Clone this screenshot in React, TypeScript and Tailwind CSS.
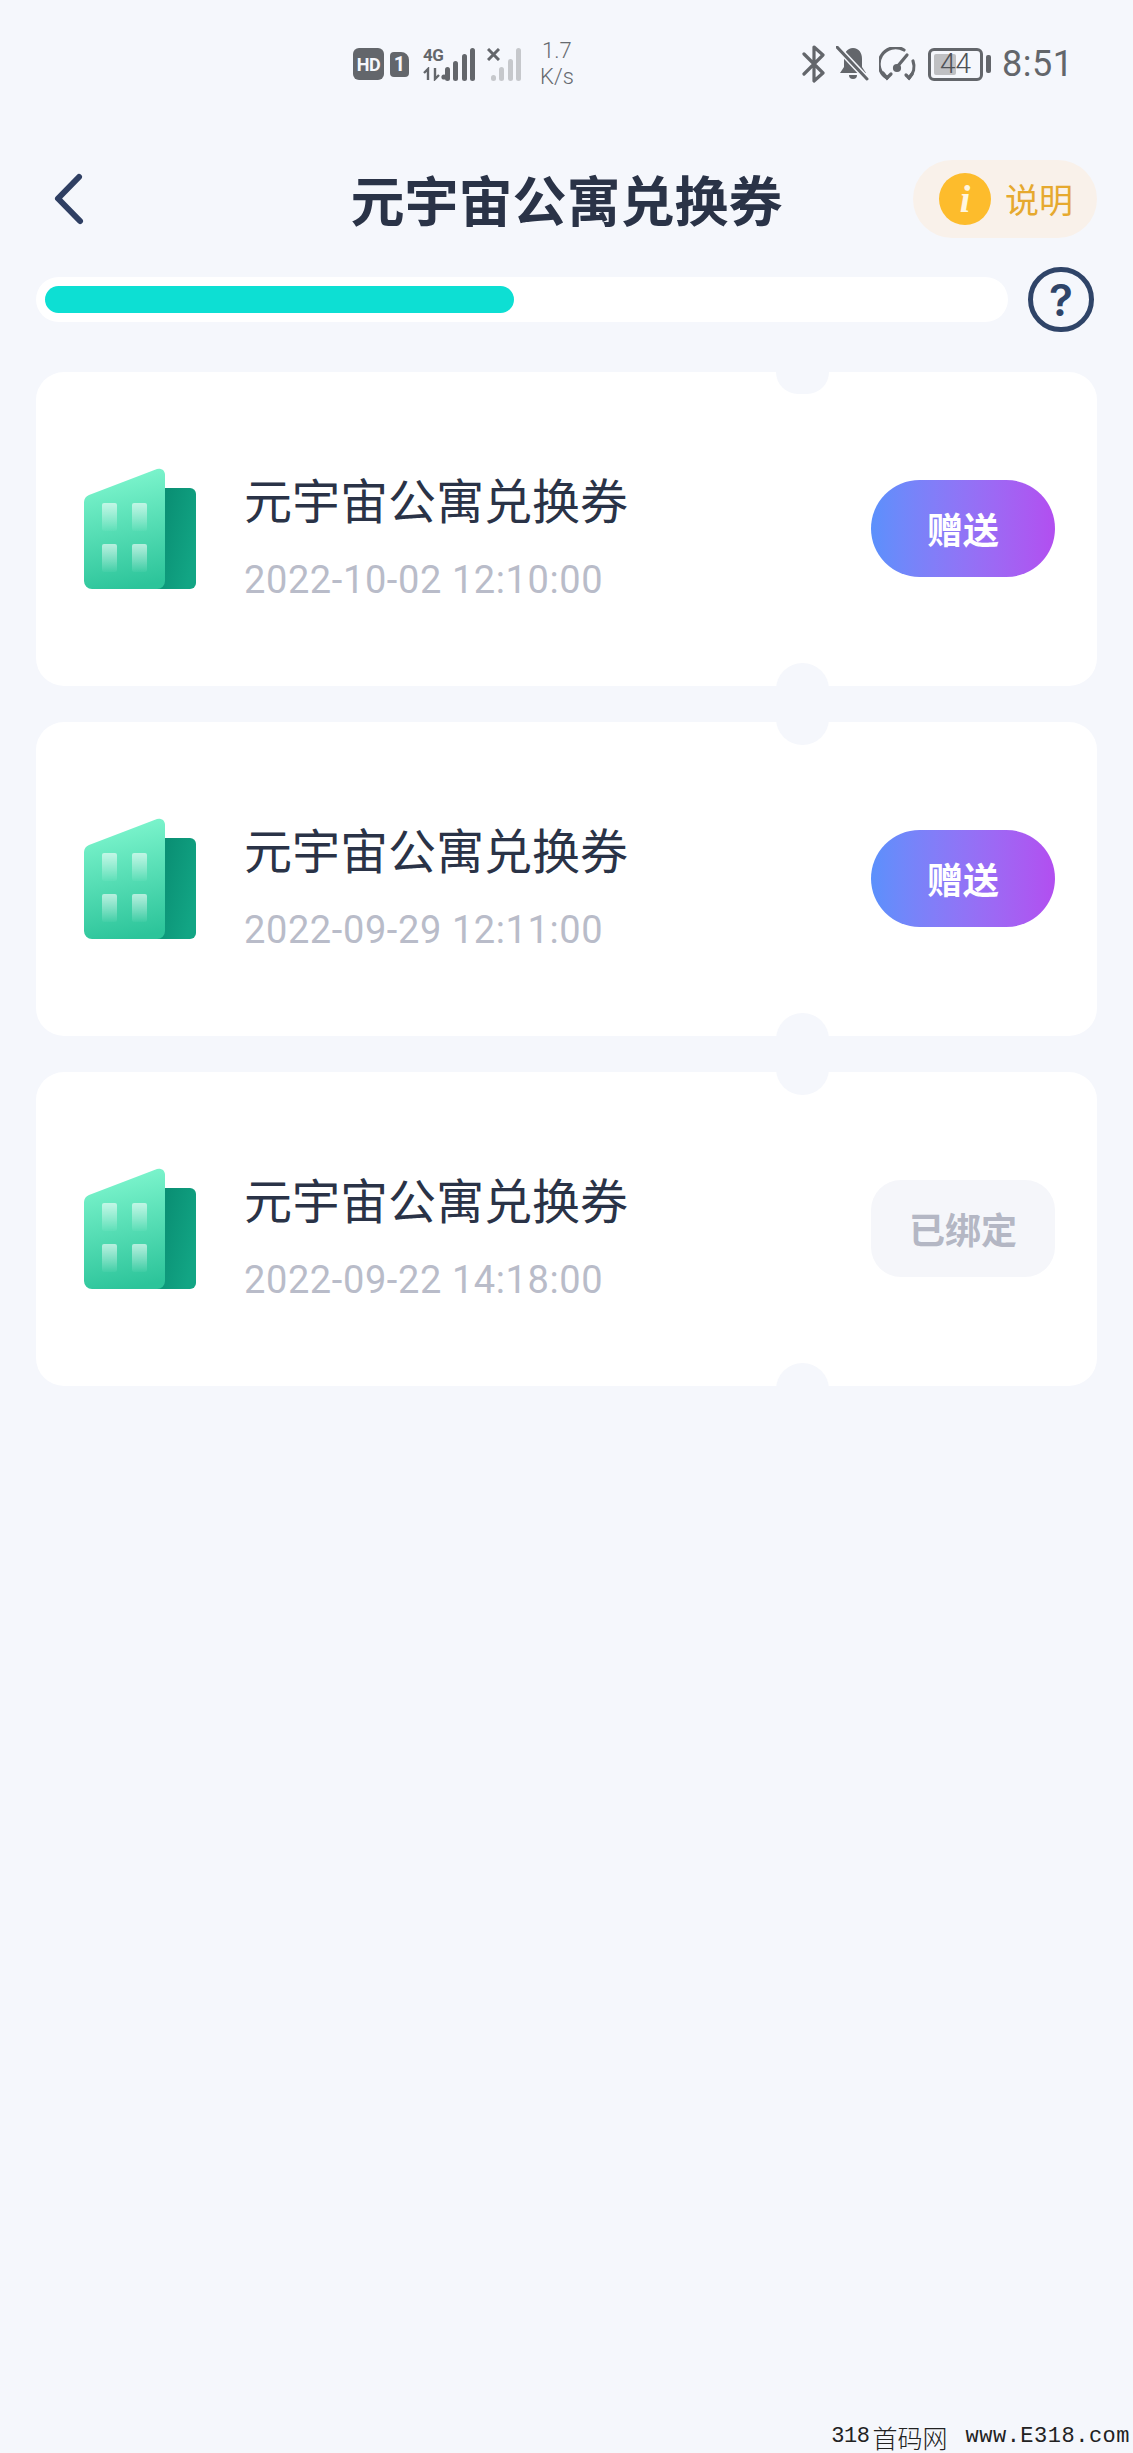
const cjk = "font-['Noto_Sans_CJK_SC',sans-serif]";

const vouchers = [
  { date: '2022-10-02 12:10:00', bound: false },
  { date: '2022-09-29 12:11:00', bound: false },
  { date: '2022-09-22 14:18:00', bound: true },
];

function SignalBars({ color, heights }: { color: string; heights: number[] }) {
  return (
    <div className="flex items-end gap-[3.5px]">
      {heights.map((h, i) => (
        <div key={i} className="w-[5px] rounded-full" style={{ height: h, backgroundColor: color }} />
      ))}
    </div>
  );
}

function StatusBar() {
  return (
    <div className="flex h-[128px] items-center pl-[353px] text-[#666a70]">
      <div className="flex h-[32px] w-[31px] items-center justify-center rounded-[6px] bg-[#63666b] font-['Roboto',sans-serif] text-[18px] font-bold tracking-[-0.5px] text-[#f5f7fc]">
        HD
      </div>
      <div className="ml-[6px] flex h-[25px] w-[19px] items-center justify-center rounded-[4px] rounded-tr-[8px] bg-[#63666b] font-['Roboto',sans-serif] text-[20px] font-bold text-[#f5f7fc]">
        1
      </div>
      <div className="relative ml-[14px] h-[33px] w-[52px]">
        <span className="absolute left-0 top-[-3px] font-['Roboto',sans-serif] text-[17px] font-bold leading-[20px] tracking-[-0.5px] text-[#63666b]">
          4G
        </span>
        <svg className="absolute bottom-0 left-0" width="24" height="14" viewBox="0 0 24 14" fill="none" stroke="#63666b" strokeWidth="2.4">
          <path d="M5 13V2L1 6M12 1v11l4-4" />
          <circle cx="21" cy="10" r="2.6" fill="#63666b" stroke="none" />
        </svg>
        <div className="absolute bottom-0 right-0">
          <SignalBars color="#63666b" heights={[14, 20, 27, 33]} />
        </div>
      </div>
      <div className="relative ml-[12px] h-[33px] w-[34px]">
        <svg className="absolute left-0 top-0" width="13" height="13" viewBox="0 0 13 13" stroke="#63666b" strokeWidth="3">
          <path d="M1 1l11 11M12 1L1 12" />
        </svg>
        <div className="absolute bottom-0 right-0">
          <SignalBars color="#c6c8cc" heights={[6, 14, 22, 33]} />
        </div>
      </div>
      <div className="ml-[19px] w-[40px] font-['Roboto',sans-serif] text-[22px] font-light leading-[26px]">
        <div className="pl-[2px]">1.7</div>
        <div>K/s</div>
      </div>
      <svg className="ml-[222px]" width="24" height="38" viewBox="0 0 24 38" fill="none" stroke="#63666b" strokeWidth="3.2" strokeLinecap="round" strokeLinejoin="round">
        <path d="M2 9l19 19-9 8V2l9 8L2 29" />
      </svg>
      <svg className="ml-[10px]" width="34" height="36" viewBox="0 0 34 36">
        <path d="M17 2c6 0 9 5 9 11v8l4 6H4l4-6v-8c0-6 3-11 9-11z" fill="#63666b" />
        <path d="M13 29a4 4 0 0 0 8 0z" fill="#63666b" />
        <path d="M1 1l31 33" stroke="#f5f7fc" strokeWidth="6" />
        <path d="M1 1l30 32" stroke="#63666b" strokeWidth="3" strokeLinecap="round" />
      </svg>
      <svg className="ml-[9px]" width="38" height="34" viewBox="0 0 38 34" fill="none" stroke="#63666b" strokeWidth="3.2" strokeLinecap="round">
        <path d="M8 31A16 16 0 0 1 25 3" />
        <path d="M34 14a16 16 0 0 1-4 17" />
        <path d="M18 20l10-12" />
        <circle cx="18" cy="21" r="2.5" fill="#63666b" />
        <path d="M4 26l4 5 4-4M27 28l3 3 3-4" />
      </svg>
      <div className="relative ml-[11px] flex h-[33px] w-[55px] items-center justify-center rounded-[6px] border-[3px] border-[#63666b]">
        <div className="absolute bottom-[3px] left-[3px] top-[3px] w-[22px] rounded-[2px] bg-[#bfc0c3]" />
        <span className="relative font-['Roboto',sans-serif] text-[28px] font-light leading-none text-[#4f5257]">44</span>
      </div>
      <div className="ml-[3px] h-[18px] w-[5px] rounded-[2px] bg-[#63666b]" />
      <span className="ml-[11px] font-['Roboto',sans-serif] text-[36px] font-normal leading-none tracking-[0.5px] text-[#63666b]">8:51</span>
    </div>
  );
}

function BuildingIcon() {
  return (
    <svg width="112" height="122" viewBox="0 0 112 122" className="shrink-0">
      <defs>
        <linearGradient id="bFront" x1="0.4" y1="0" x2="0.55" y2="1">
          <stop offset="0" stopColor="#80f7cf" />
          <stop offset="1" stopColor="#2cc49a" />
        </linearGradient>
        <linearGradient id="bBack" x1="0" y1="0" x2="1" y2="0.6">
          <stop offset="0" stopColor="#07886e" />
          <stop offset="1" stopColor="#12a584" />
        </linearGradient>
        <linearGradient id="bWin" x1="0" y1="0" x2="0" y2="1">
          <stop offset="0" stopColor="#ffffff" stopOpacity="0.6" />
          <stop offset="1" stopColor="#ffffff" stopOpacity="0.04" />
        </linearGradient>
        <filter id="bBlur" x="-20%" y="-20%" width="140%" height="140%">
          <feGaussianBlur stdDeviation="0.7" />
        </filter>
      </defs>
      <path d="M70 20h36a6 6 0 0 1 6 6v89a6 6 0 0 1-6 6H70z" fill="url(#bBack)" />
      <path d="M0 34a8 8 0 0 1 5-7L73 1a6 6 0 0 1 8 6v106a8 8 0 0 1-8 8H8a8 8 0 0 1-8-8z" fill="url(#bFront)" />
      <g filter="url(#bBlur)">
        <rect x="18" y="35" width="15" height="28" rx="2" fill="url(#bWin)" />
        <rect x="48" y="35" width="15" height="28" rx="2" fill="url(#bWin)" />
        <rect x="18" y="76" width="15" height="28" rx="2" fill="url(#bWin)" />
        <rect x="48" y="76" width="15" height="28" rx="2" fill="url(#bWin)" />
      </g>
    </svg>
  );
}

function VoucherCard({ date, bound, first }: { date: string; bound: boolean; first: boolean }) {
  return (
    <div className="relative flex h-[314px] items-center rounded-[28px] bg-white pl-[48px] pr-[42px]">
      {first && <div className="absolute left-[740px] top-0 h-[22px] w-[53px] rounded-b-[26px] bg-[#f5f7fc]" />}
      <div className="absolute bottom-[-59px] left-[740px] z-10 h-[82px] w-[53px] rounded-full bg-[#f5f7fc]" />
      <BuildingIcon />
      <div className="ml-[48px] flex flex-1 flex-col pt-[12px]">
        <div className={`${cjk} text-[48px] leading-[60px] text-[#2a3347]`}>元宇宙公寓兑换券</div>
        <div className="mt-[29px] font-['Roboto',sans-serif] text-[38px] leading-[46px] tracking-[0.6px] text-[#b9bcc9]">{date}</div>
      </div>
      {bound ? (
        <div className={`${cjk} mb-[2px] flex h-[97px] w-[184px] items-center justify-center rounded-[30px] bg-[#f5f6fa] text-[36px] font-bold text-[#b4b7c4]`}>
          已绑定
        </div>
      ) : (
        <div className={`${cjk} mb-[2px] flex h-[97px] w-[184px] items-center justify-center rounded-full bg-gradient-to-r from-[#5a90fc] to-[#b24ef0] text-[36px] font-bold text-white`}>
          赠送
        </div>
      )}
    </div>
  );
}

export default function App() {
  return (
    <div className="flex h-[2453px] flex-col overflow-hidden bg-[#f5f7fc]">
      <StatusBar />

      <div className="mt-[32px] grid h-[78px] grid-cols-[1fr_auto_1fr] items-center px-[36px]">
        <svg width="40" height="60" viewBox="0 0 40 60" fill="none" stroke="#2f3f63" strokeWidth="6" strokeLinecap="round" strokeLinejoin="round" className="ml-[16px]">
          <path d="M25 8L4 29.5 26 52" transform="translate(2 0)" />
        </svg>
        <h1 className={`${cjk} text-[54px] font-bold leading-none text-[#2a3347]`}>元宇宙公寓兑换券</h1>
        <div className="flex h-[78px] w-[184px] items-center justify-self-end rounded-full bg-[#f9f1ea] pl-[26px]">
          <div className="flex h-[52px] w-[52px] items-center justify-center rounded-full bg-[#fdbc2c] font-['Liberation_Serif',serif] text-[38px] font-bold italic leading-none text-[#fff6e0]">
            i
          </div>
          <span className={`${cjk} ml-[14px] text-[34px] leading-none text-[#e6a92f]`}>说明</span>
        </div>
      </div>

      <div className="mt-[29px] flex h-[65px] items-center pl-[36px]">
        <div className="h-[45px] w-[972px] rounded-full bg-white p-[9px]">
          <div className="h-[27px] w-[469px] rounded-full bg-[#0ddfd3]" />
        </div>
        <div className="ml-[20px] flex h-[65px] w-[66px] items-center justify-center rounded-full border-[5px] border-[#2f4468] font-['Inter',sans-serif] text-[44px] font-semibold leading-none text-[#2f4468]">
          ?
        </div>
      </div>

      <div className="mt-[40px] flex flex-col gap-[36px] px-[36px]">
        {vouchers.map((v, i) => (
          <VoucherCard key={v.date} date={v.date} bound={v.bound} first={i === 0} />
        ))}
      </div>

      <div className="mt-auto flex items-center justify-end pb-[3px] pr-[3px] leading-[26px] text-[#222]">
        <span className="font-['Liberation_Mono',monospace] text-[22px] tracking-[-0.4px]">318</span>
        <span className={`${cjk} ml-[3px] text-[25px] font-light`}>首码网</span>
        <span className="ml-[18px] font-['Liberation_Mono',monospace] text-[22px] tracking-[0.5px]">www.E318.com</span>
      </div>
    </div>
  );
}
